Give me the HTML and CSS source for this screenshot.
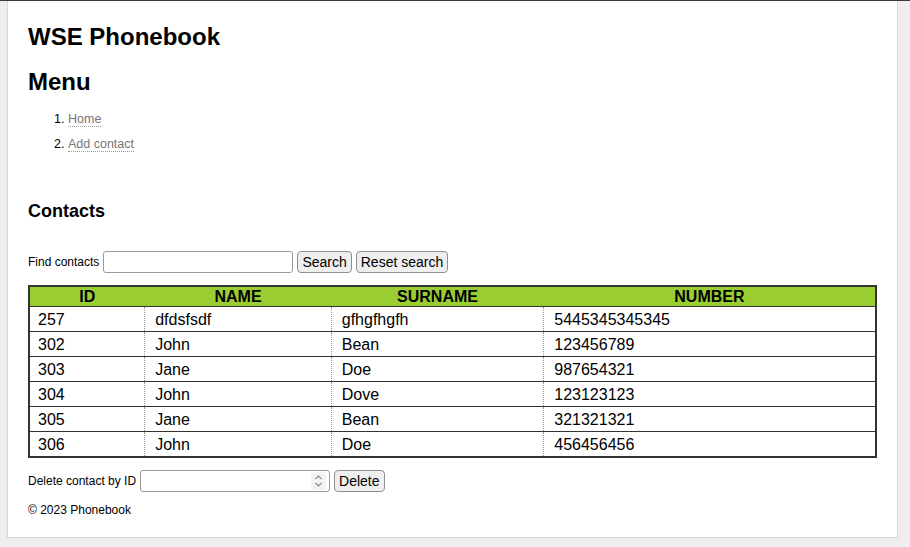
FILE: index.html
```html
<!DOCTYPE html>
<html lang="en">
<head>
<meta charset="utf-8">
<title>WSE Phonebook</title>
<link rel="stylesheet" href="styles.css">
</head>
<body>
<div class="page">
  <h1 class="title">WSE Phonebook</h1>
  <h1 class="title menu-title">Menu</h1>
  <ol class="menu">
    <li><a href="#">Home</a></li>
    <li><a href="#">Add contact</a></li>
  </ol>
  <h2 class="section">Contacts</h2>
  <form class="row search-row">
    <label class="lbl">Find contacts</label>
    <input class="field" type="text">
    <button class="btn" type="button">Search</button>
    <button class="btn" type="button">Reset search</button>
  </form>
  <table class="contacts">
    <colgroup>
      <col class="c-id"><col class="c-name"><col class="c-surname"><col class="c-number">
    </colgroup>
    <thead>
      <tr><th>ID</th><th>NAME</th><th>SURNAME</th><th>NUMBER</th></tr>
    </thead>
    <tbody>
      <tr><td>257</td><td>dfdsfsdf</td><td>gfhgfhgfh</td><td>5445345345345</td></tr>
      <tr><td>302</td><td>John</td><td>Bean</td><td>123456789</td></tr>
      <tr><td>303</td><td>Jane</td><td>Doe</td><td>987654321</td></tr>
      <tr><td>304</td><td>John</td><td>Dove</td><td>123123123</td></tr>
      <tr><td>305</td><td>Jane</td><td>Bean</td><td>321321321</td></tr>
      <tr><td>306</td><td>John</td><td>Doe</td><td>456456456</td></tr>
    </tbody>
  </table>
  <form class="row delete-row">
    <label class="lbl">Delete contact by ID</label>
    <span class="field numfield">
      <input class="numinput" type="text">
      <span class="spin">
        <svg width="9" height="14" viewBox="0 0 9 14"><path d="M1.5 5 L4.5 2 L7.5 5 M1.5 9 L4.5 12 L7.5 9" fill="none" stroke="#8a8a8a" stroke-width="1.1"/></svg>
      </span>
    </span>
    <button class="btn" type="button">Delete</button>
  </form>
  <footer class="foot">© 2023 Phonebook</footer>
</div>
</body>
</html>
```
FILE: styles.css
```css
html, body {
  margin: 0;
  padding: 0;
}
body {
  background: #eeeeee;
  border-top: 1px solid #3a3a3a;
  font-family: "Liberation Sans", Arial, sans-serif;
  color: #000;
  height: 546px;
  box-sizing: border-box;
}
.page {
  background: #fff;
  margin: 0 12px 0 7px;
  border: 1px solid #d6d6d6;
  border-top: none;
  padding: 22px 20px 19px 20px;
}
.title {
  font-size: 24px;
  line-height: 27px;
  font-weight: bold;
  margin: 0 0 18px 0;
}
.menu-title {
  margin-bottom: 12px;
}
.menu {
  margin: 0;
  padding-left: 40px;
  font-size: 12.5px;
}
.menu li {
  line-height: 25px;
}
.menu a {
  color: #777;
  text-decoration: none;
  border-bottom: 1px dotted #999;
}
.section {
  font-size: 18px;
  line-height: 20px;
  font-weight: bold;
  margin: 44px 0 30px 0;
}
.row {
  display: flex;
  align-items: center;
  height: 22px;
  gap: 4px;
  margin: 0;
}
.lbl {
  font-size: 12px;
}
.field {
  width: 190px;
  height: 22px;
  box-sizing: border-box;
  border: 1px solid #9a9a9a;
  border-radius: 3px;
  background: #fff;
  padding: 0 4px;
  font: 13px "Liberation Sans", Arial, sans-serif;
}
.btn {
  height: 22px;
  box-sizing: border-box;
  border: 1px solid #8f8f8f;
  border-radius: 4px;
  background: #efefef;
  padding: 0 4px;
  font: 14px "Liberation Sans", Arial, sans-serif;
  color: #000;
}
.search-row {
  margin-bottom: 12px;
}
.contacts {
  width: 100%;
  border-collapse: collapse;
  border: 2px solid #333;
  font-size: 16px;
}
.c-id { width: 116px; }
.c-name { width: 187px; }
.c-surname { width: 213px; }
.c-number { width: 333px; }
.contacts th {
  background: #9acd32;
  font-weight: bold;
  text-align: center;
  height: 19px;
  padding: 0;
  border-bottom: 1px solid #333;
  line-height: 18px;
}
.contacts td {
  height: 24px;
  padding: 0 10px;
  border-top: 1px solid #333;
  border-left: 1px dotted #999;
  line-height: 19px;
}
.contacts td:first-child {
  border-left: none;
  padding-left: 8px;
}
.delete-row {
  margin-top: 12px;
}
.numfield {
  display: flex;
  align-items: center;
  padding: 0 3px 0 4px;
}
.numinput {
  flex: 1;
  min-width: 0;
  border: none;
  outline: none;
  padding: 0;
  font: 13px "Liberation Sans", Arial, sans-serif;
  background: transparent;
}
.spin {
  display: flex;
  align-items: center;
  justify-content: center;
  width: 15px;
  height: 18px;
  background: #f2f2f2;
  border-radius: 2px;
}
.foot {
  font-size: 12px;
  line-height: 16px;
  margin-top: 10px;
}
```
